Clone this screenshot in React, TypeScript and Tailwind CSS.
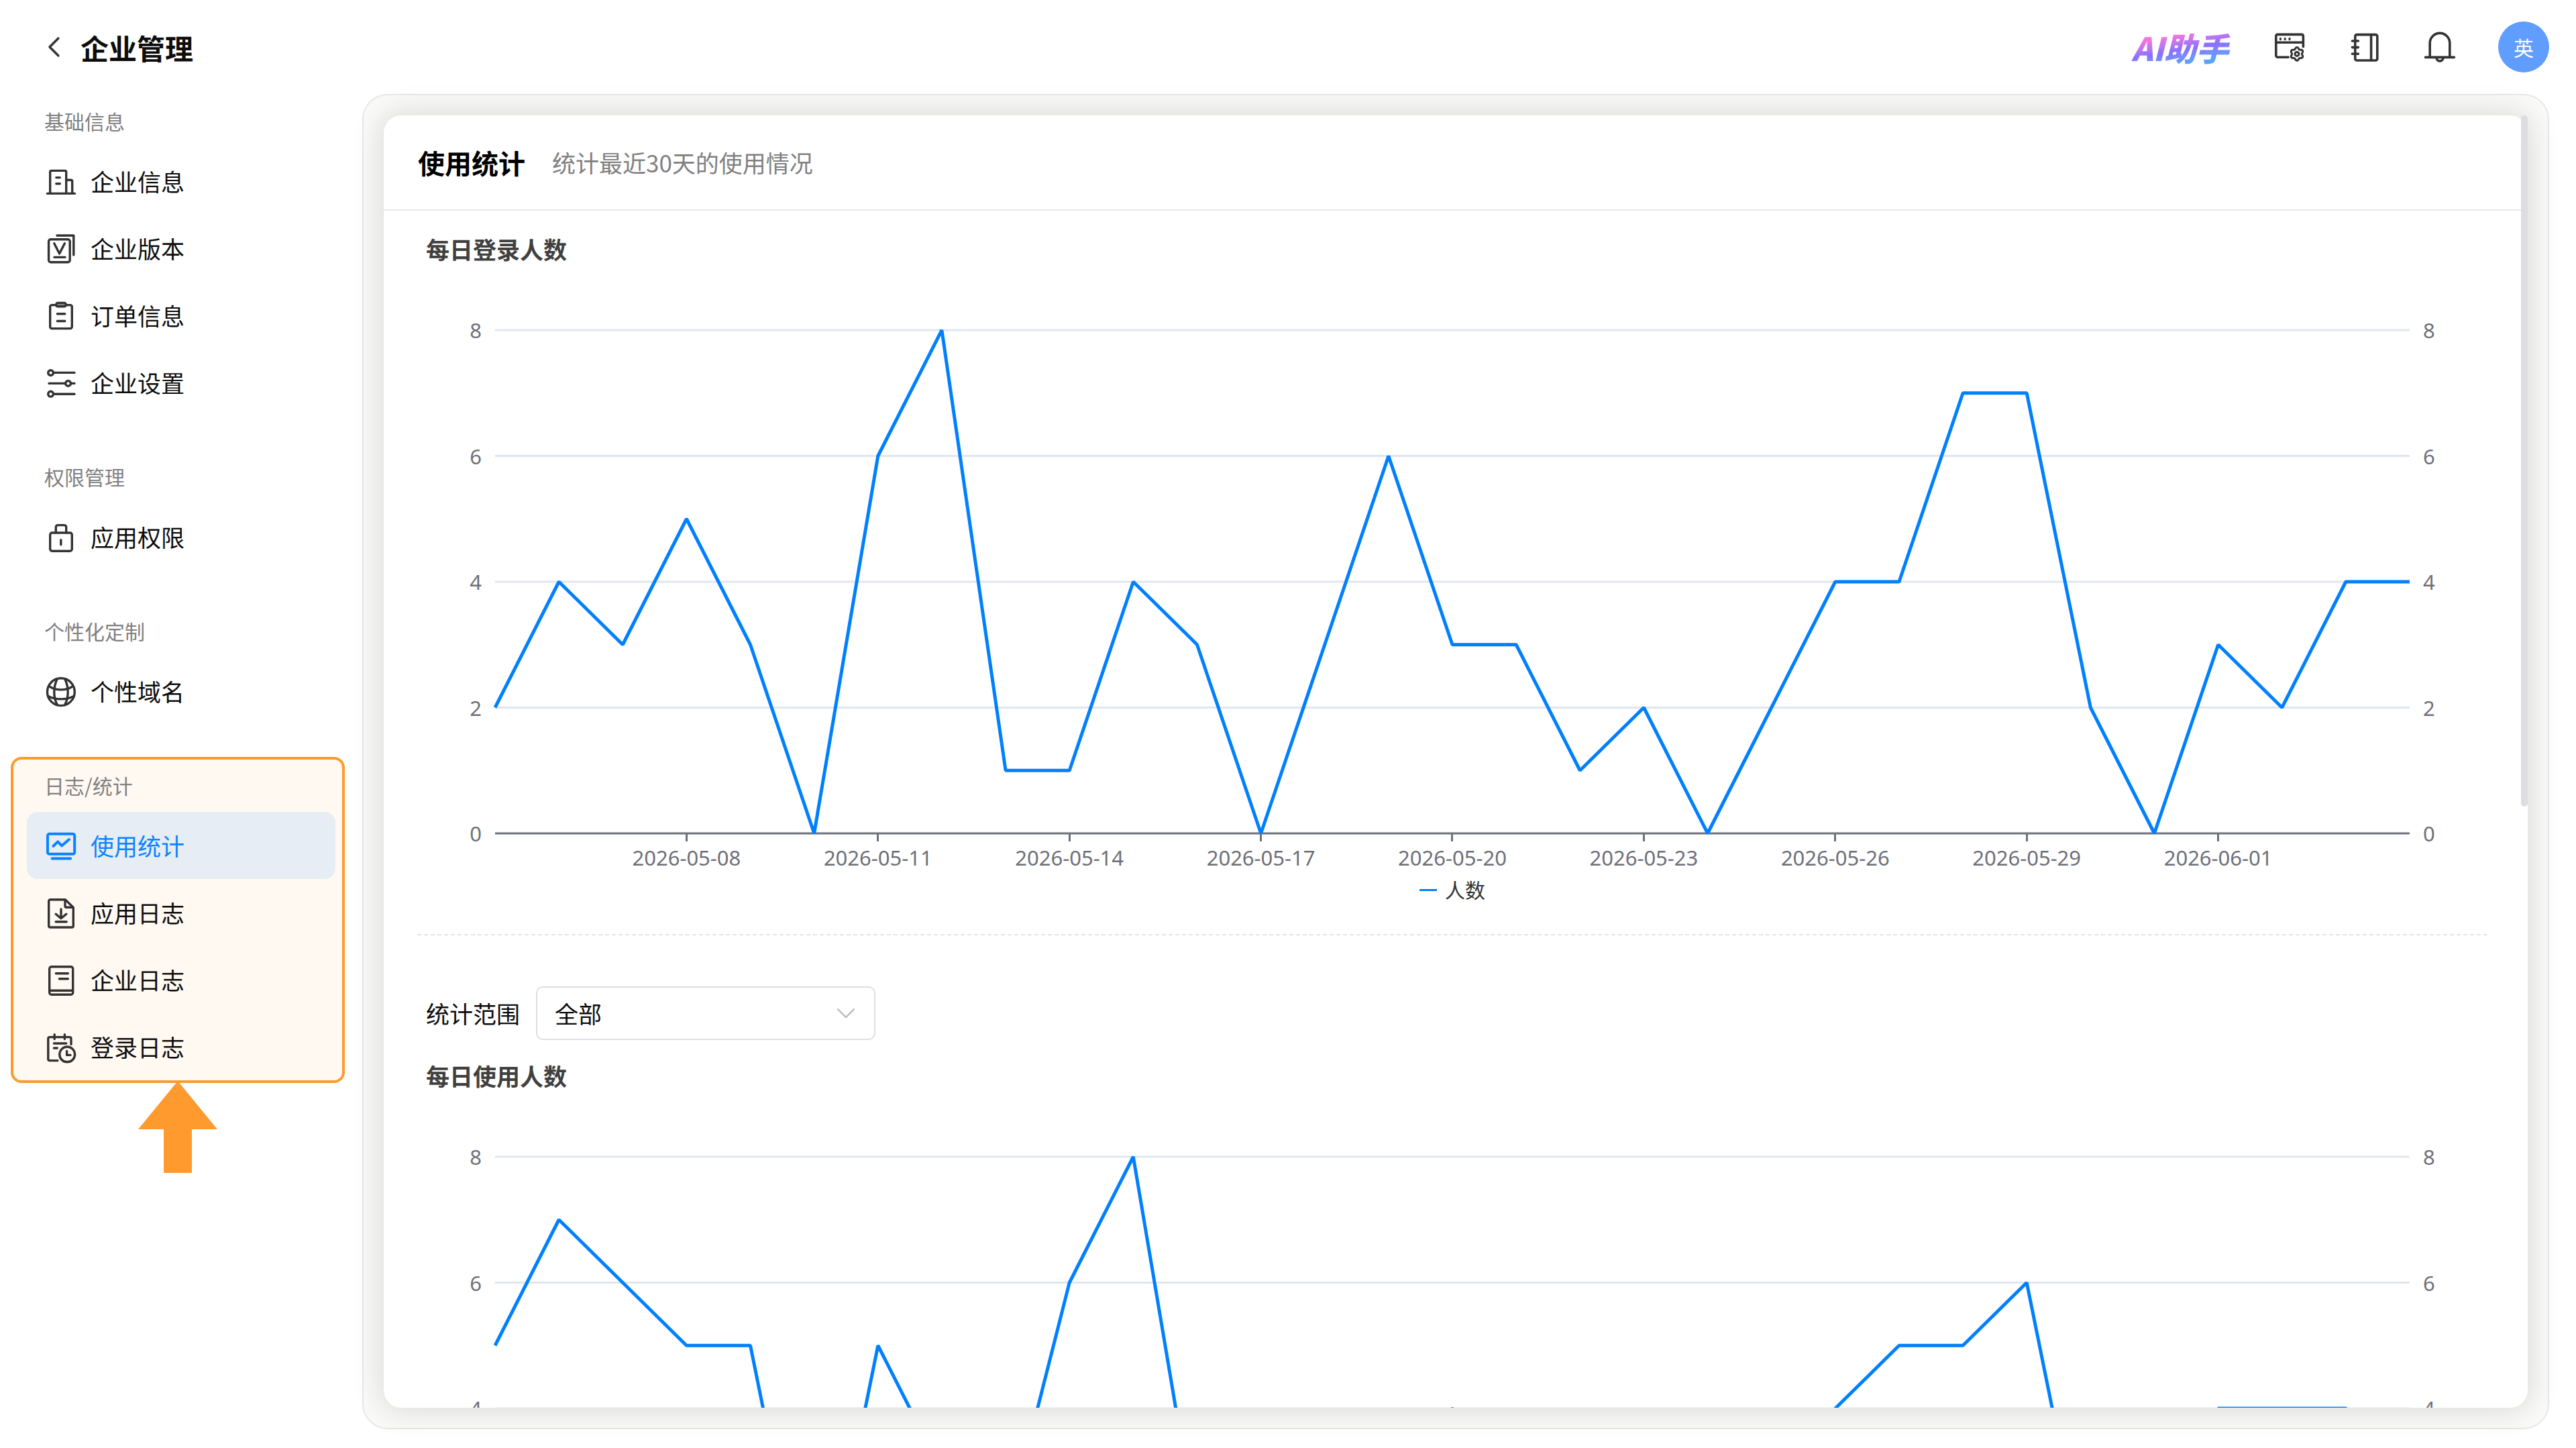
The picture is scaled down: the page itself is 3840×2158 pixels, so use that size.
import React, { useId } from "react";

type IconProps = { children: React.ReactNode };

function MenuIcon({ children }: IconProps) {
  return (
    <svg
      viewBox="0 0 45 45"
      className="size-[45px] shrink-0 overflow-visible"
      fill="none"
      stroke="currentColor"
      strokeWidth="3.4"
      strokeLinecap="round"
      strokeLinejoin="round"
      aria-hidden="true"
    >
      {children}
    </svg>
  );
}

function HeaderIcon({ children }: IconProps) {
  return (
    <svg
      viewBox="0 0 50 50"
      className="size-[50px] overflow-visible"
      fill="none"
      stroke="currentColor"
      strokeWidth="3.6"
      strokeLinecap="round"
      strokeLinejoin="round"
      aria-hidden="true"
    >
      {children}
    </svg>
  );
}

const BuildingIcon = () => (
  <MenuIcon>
    <path d="M6.7 40V8.4a2 2 0 0 1 2-2h20a2 2 0 0 1 2 2V40" />
    <path d="M30.8 20.3h6.9a2 2 0 0 1 2 2V40" />
    <path d="M2.4 40.4h41" />
    <path d="M15.8 16.6h5.6M15.8 25.8h5.6" />
  </MenuIcon>
);

const VersionIcon = () => (
  <MenuIcon>
    <rect x="4.6" y="8.8" width="31.6" height="34" rx="3" />
    <path d="M17 3h24.8v29" />
    <path d="M12.8 14.8l7.8 15.2 7.8-15.2" />
    <path d="M13 35.4h16" />
  </MenuIcon>
);

const ClipboardIcon = () => (
  <MenuIcon>
    <rect x="6.7" y="6.6" width="32.6" height="35" rx="2.5" />
    <rect x="15.6" y="3.4" width="14.8" height="5.4" rx="2.7" fill="#8a8a8a" />
    <path d="M17.4 19.8h11.4M17.4 30.5h11.4" />
  </MenuIcon>
);

const SlidersIcon = () => (
  <MenuIcon>
    <circle cx="7.6" cy="7.6" r="3.9" />
    <path d="M12.6 7.4H43" />
    <circle cx="33.6" cy="23.4" r="3.9" />
    <path d="M5 23.4h24M38.4 23.4H43" />
    <circle cx="7.6" cy="39.2" r="3.9" />
    <path d="M12.6 39.2H43" />
  </MenuIcon>
);

const LockIcon = () => (
  <MenuIcon>
    <rect x="6.7" y="16" width="32.6" height="27.2" rx="3" />
    <path d="M15.3 16V7.6a3 3 0 0 1 3-3h9.4a3 3 0 0 1 3 3V16" />
    <path d="M22.8 26.6v7.2" />
  </MenuIcon>
);

const GlobeIcon = () => (
  <MenuIcon>
    <circle cx="22.9" cy="23.2" r="20.4" />
    <path d="M17.4 4C11.2 15 11.2 31.4 17.4 42.4M28.6 4c6.2 11 6.2 27.4 0 38.4" />
    <path d="M5.6 14.8c9.6 6.8 25 6.8 34.6 0M3.6 29.4c10.4 6 28.2 6 38.6 0" />
  </MenuIcon>
);

const MonitorIcon = () => (
  <MenuIcon>
    <rect x="3" y="4.8" width="40.2" height="30" rx="2.6" strokeWidth="4" />
    <path d="M11.4 23l6.8-6.6 5.8 6L35 13" strokeWidth="4" />
    <path d="M9.6 41.4h27.6" strokeWidth="4" />
  </MenuIcon>
);

const FileDownIcon = () => (
  <MenuIcon>
    <path d="M7 2.8h22.3l12 11.6V42a2 2 0 0 1-2 2H7a2.3 2.3 0 0 1-2.3-2V5A2.2 2.2 0 0 1 7 2.8z" />
    <path d="M29 3.4v8.8a2 2 0 0 0 2 2h9.6" />
    <path d="M23 17v13.6M15.2 24.2L23 30.8l7.8-6.6M15.2 35.8h16" />
  </MenuIcon>
);

const BookIcon = () => (
  <MenuIcon>
    <rect x="5.7" y="2.8" width="35" height="41.4" rx="3" />
    <path d="M6 38.2h34.4" />
    <path d="M15.4 12.8h18M20.4 20.8h13" />
  </MenuIcon>
);

const CalendarClockIcon = () => (
  <MenuIcon>
    <path d="M38 18.4V10a2.4 2.4 0 0 0-2.4-2.4H6.2A2.4 2.4 0 0 0 3.8 10v30.2a2.4 2.4 0 0 0 2.4 2.4H18" />
    <path d="M13.2 3.6v7M28.4 3.6v7" />
    <path d="M12.4 17h18.4M12.4 24h5" />
    <circle cx="32.2" cy="33.4" r="11.4" />
    <path d="M31.6 28.4v6h5.4" />
  </MenuIcon>
);

/* Six-lobed outline of the gear badge. */
const gearPath =
  Array.from({ length: 72 }, (_, i) => {
    const a = (i / 72) * Math.PI * 2;
    const r = 8.6 + 1.2 * Math.cos(6 * (a - Math.PI / 2));
    return `${i ? "L" : "M"}${(36 + r * Math.cos(a)).toFixed(2)} ${(35.4 + r * Math.sin(a)).toFixed(2)}`;
  }).join("") + "z";

const WindowGearIcon = () => (
  <HeaderIcon>
    <path d="M45.4 24.6V8.8a2.4 2.4 0 0 0-2.4-2.4H7.2a2.4 2.4 0 0 0-2.4 2.4v29a2.4 2.4 0 0 0 2.4 2.4h16" />
    <path d="M5 18.2h40" />
    <path d="M11.4 12.2v1.6M18.2 12.2v1.6M25 12.2v1.6" strokeWidth="3" />
    <path d={gearPath} strokeWidth="3" />
    <circle cx="36" cy="35.4" r="3" strokeWidth="3" />
  </HeaderIcon>
);

const NotebookIcon = () => (
  <HeaderIcon>
    <rect x="10.8" y="6.6" width="33" height="38.4" rx="2.6" />
    <path d="M34.6 7v37.6" />
    <path d="M6.4 16h9M6.4 25.6h9M6.4 35.2h9" />
  </HeaderIcon>
);

const BellIcon = () => (
  <HeaderIcon>
    <path d="M10.2 40V19.2a14.8 14.8 0 0 1 29.6 0V40" />
    <path d="M3.6 40.4h42.8" />
    <path d="M19.8 41a5.3 6.2 0 0 0 10.4 0" />
  </HeaderIcon>
);

type MenuItem = { label: string; icon: () => React.ReactElement; active?: boolean };
type MenuGroup = { title: string; items: MenuItem[]; highlighted?: boolean };

const menu: MenuGroup[] = [
  {
    title: "基础信息",
    items: [
      { label: "企业信息", icon: BuildingIcon },
      { label: "企业版本", icon: VersionIcon },
      { label: "订单信息", icon: ClipboardIcon },
      { label: "企业设置", icon: SlidersIcon },
    ],
  },
  { title: "权限管理", items: [{ label: "应用权限", icon: LockIcon }] },
  { title: "个性化定制", items: [{ label: "个性域名", icon: GlobeIcon }] },
  {
    title: "日志/统计",
    highlighted: true,
    items: [
      { label: "使用统计", icon: MonitorIcon, active: true },
      { label: "应用日志", icon: FileDownIcon },
      { label: "企业日志", icon: BookIcon },
      { label: "登录日志", icon: CalendarClockIcon },
    ],
  },
];

function Highlight() {
  return (
    <div className="pointer-events-none absolute -top-0.5 -right-[14px] -bottom-1 -left-6 rounded-2xl border-4 border-[#ff9a2e] bg-[#fff9f2]">
      <svg
        viewBox="0 0 118 138"
        className="absolute top-full left-1/2 h-[138px] w-[118px] -translate-x-1/2"
        aria-hidden="true"
      >
        <path d="M59 1l59 72H80v65H38V73H0z" fill="#ff9a2e" />
      </svg>
    </div>
  );
}

function Sidebar() {
  return (
    <nav className="flex w-[540px] shrink-0 flex-col gap-[50px] pr-10 pl-10">
      {menu.map((group) => (
        <section key={group.title} className="relative">
          {group.highlighted && <Highlight />}
          <h2 className="relative flex h-20 items-center pl-[26px] text-[30px] text-[#808080]">
            {group.title}
          </h2>
          <ul className="relative">
            {group.items.map(({ label, icon: Icon, active }) => (
              <li key={label}>
                <a
                  href="#"
                  aria-current={active ? "page" : undefined}
                  className={
                    active
                      ? "flex h-[100px] items-center gap-[22px] rounded-2xl bg-[#e6edf4] pl-7 text-[#0b83ff]"
                      : "flex h-[100px] items-center gap-[22px] rounded-2xl pl-7 text-[#333333]"
                  }
                >
                  <Icon />
                  <span className={active ? "text-[35px]" : "text-[35px] text-[#0d0d0d]"}>
                    {label}
                  </span>
                </a>
              </li>
            ))}
          </ul>
        </section>
      ))}
    </nav>
  );
}

function Header() {
  return (
    <header className="flex h-[140px] shrink-0 items-center justify-between pr-10 pl-[66px]">
      <div className="flex items-center gap-[26px]">
        <button type="button" aria-label="返回" className="text-[#333333]">
          <svg viewBox="0 0 28 36" className="h-9 w-7" fill="none" aria-hidden="true">
            <path
              d="M21 5L8 18l13 13"
              stroke="currentColor"
              strokeWidth="3.4"
              strokeLinecap="round"
              strokeLinejoin="round"
            />
          </svg>
        </button>
        <h1 className="text-[42px] font-bold text-[#0d0d0d]">企业管理</h1>
      </div>
      <div className="flex items-center gap-[62px] text-[#333333]">
        <button
          type="button"
          className="bg-linear-170 from-[#ff73dc] from-25% via-[#8a70ff] via-55% to-[#56a4ff] to-80% bg-clip-text pr-1 text-[48px] leading-[60px] font-black text-transparent italic"
        >
          AI助手
        </button>
        <button type="button" aria-label="应用设置">
          <WindowGearIcon />
        </button>
        <button type="button" aria-label="通讯录">
          <NotebookIcon />
        </button>
        <button type="button" aria-label="通知">
          <BellIcon />
        </button>
        <button
          type="button"
          className="flex size-[76px] items-center justify-center rounded-full bg-[#5f9dff] text-[30px] text-white"
        >
          英
        </button>
      </div>
    </header>
  );
}

const loginCounts = [
  2, 4, 3, 5, 3, 0, 6, 8, 1, 1, 4, 3, 0, 3, 6, 3, 3, 1, 2, 0, 2, 4, 4, 7, 7, 2, 0, 3, 2, 4, 4,
];
const usageCounts = [
  5, 7, 6, 5, 5, 0, 5, 3, 2, 6, 8, 2, 0, 2, 3, 4, 3, 2, 1, 0, 2, 4, 5, 5, 6, 1, 0, 4, 4, 4, 3,
];
const yTicks = [8, 6, 4, 2, 0];
const dateTicks = [
  "2026-05-08",
  "2026-05-11",
  "2026-05-14",
  "2026-05-17",
  "2026-05-20",
  "2026-05-23",
  "2026-05-26",
  "2026-05-29",
  "2026-06-01",
];

function YAxis({ side }: { side: "left" | "right" }) {
  return (
    <div
      className={
        side === "left"
          ? "-my-5 flex w-[116px] shrink-0 flex-col justify-between pr-5 text-right"
          : "-my-5 flex w-[116px] shrink-0 flex-col justify-between pl-5 text-left"
      }
    >
      {yTicks.map((v) => (
        <span key={v} className="leading-10">
          {v}
        </span>
      ))}
    </div>
  );
}

function LineChart({ title, values }: { title: string; values: number[] }) {
  const last = values.length - 1;
  const points = values.map((v, i) => `${i},${8 - v}`).join(" ");
  return (
    <figure>
      <figcaption className="pl-[13px] text-[35px] leading-10 font-bold text-[#404040]">
        {title}
      </figcaption>
      <div className="mt-[101px] font-['Noto_Sans','Noto_Sans_CJK_SC',sans-serif] text-[31px] text-[#6e7079]">
        <div className="flex h-[750px]">
          <YAxis side="left" />
          <svg
            viewBox={`0 0 ${last} 8`}
            preserveAspectRatio="none"
            className="h-full min-w-0 flex-1 overflow-visible"
            fill="none"
            role="img"
            aria-label={title}
          >
            {yTicks.map((v) => (
              <path
                key={v}
                d={`M0 ${8 - v}H${last}`}
                stroke={v === 0 ? "#6e7079" : "#e0e6f1"}
                strokeWidth="3"
                vectorEffect="non-scaling-stroke"
              />
            ))}
            <polyline
              points={points}
              stroke="#0080ff"
              strokeWidth="5"
              strokeLinejoin="bevel"
              vectorEffect="non-scaling-stroke"
            />
          </svg>
          <YAxis side="right" />
        </div>
        <div className="mx-[116px] grid grid-cols-[1fr_repeat(9,2fr)_1fr]">
          {dateTicks.map((d) => (
            <div key={d} className="flex min-w-0 flex-col items-center first:col-start-2">
              <i className="h-3 w-[3px] bg-[#6e7079]" />
              <span className="leading-[48px] whitespace-nowrap">{d}</span>
            </div>
          ))}
        </div>
        <div className="flex h-12 items-center justify-center gap-3 text-[30px] text-[#333333]">
          <i className="h-[3px] w-[26px] bg-[#0080ff]" />
          人数
        </div>
      </div>
    </figure>
  );
}

function RangeSelect() {
  const id = useId();
  return (
    <div className="flex items-center gap-6 pl-[13px] text-[35px] text-[#0d0d0d]">
      <label htmlFor={id}>统计范围</label>
      <div className="relative">
        <select
          id={id}
          className="h-20 w-[506px] appearance-none rounded-[10px] border-2 border-[#dcdfe8] bg-white pr-16 pl-[26px]"
        >
          <option>全部</option>
        </select>
        <svg
          viewBox="0 0 28 16"
          className="pointer-events-none absolute top-8 right-[30px] h-4 w-7"
          fill="none"
          aria-hidden="true"
        >
          <path d="M2 2l12 12L26 2" stroke="#b8bbc2" strokeWidth="2.4" strokeLinecap="round" />
        </svg>
      </div>
    </div>
  );
}

function Panel() {
  return (
    <main className="min-w-0 flex-1 rounded-[38px] border-2 border-[#e8e8e7] bg-[#fafaf8] p-[30px]">
      <div className="relative h-full rounded-[26px] bg-white shadow-[0_0_44px_6px_rgba(0,0,0,0.12)]">
        <div className="h-full overflow-y-auto rounded-[26px] pr-[10px] [scrollbar-width:none]">
          <div className="flex h-[142px] items-center border-b-2 border-[#e8e8e8] pl-[51px]">
            <h2 className="text-[40px] font-bold text-black">使用统计</h2>
            <p className="ml-10 text-[35px] text-[#808080]">统计最近30天的使用情况</p>
          </div>
          <div className="px-[50px] pt-[37px]">
            <LineChart title="每日登录人数" values={loginCounts} />
            <hr className="mt-[42px] mb-[76px] border-t-2 border-dashed border-[#e4e4e4]" />
            <RangeSelect />
            <div className="mt-[33px]">
              <LineChart title="每日使用人数" values={usageCounts} />
            </div>
          </div>
        </div>
        <div className="absolute top-0 right-0 h-[1030px] w-[10px] rounded-full bg-[#dcdde0]" />
      </div>
    </main>
  );
}

export default function App() {
  return (
    <div className="flex h-screen flex-col overflow-hidden bg-white font-['Noto_Sans_CJK_SC',sans-serif]">
      <Header />
      <div className="flex min-h-0 flex-1 pr-10 pb-7">
        <Sidebar />
        <Panel />
      </div>
    </div>
  );
}
